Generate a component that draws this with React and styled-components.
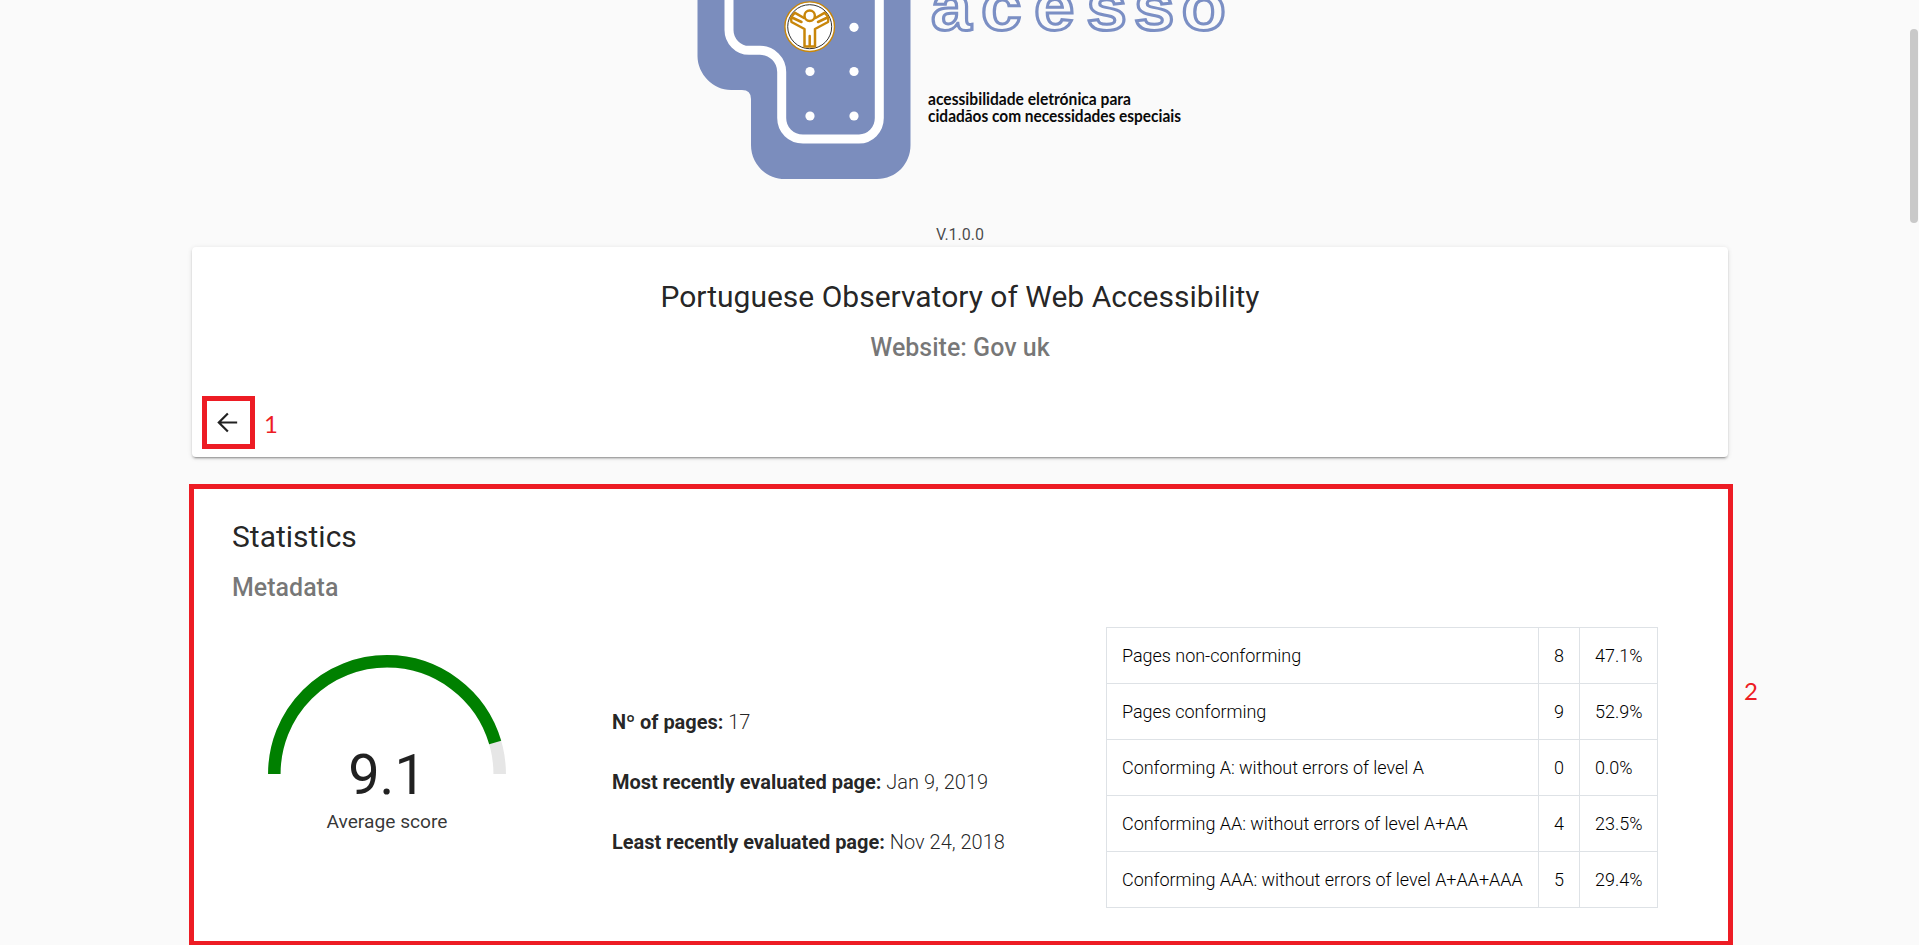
import React from "react";
import styled, { createGlobalStyle } from "styled-components";

const Global = createGlobalStyle`
  * { box-sizing: border-box; }
  html, body { margin: 0; background: #fafafa; }
  body { overflow: hidden; font-family: Roboto, "Liberation Sans", sans-serif; color: rgba(0, 0, 0, 0.87); }
`;

const Page = styled.div`
  position: relative;
  height: 945px;
  overflow: hidden;
  background: #fafafa;
`;

const Header = styled.header`
  height: 247px;
  display: flex;
  flex-direction: column;
  align-items: center;
`;

const LogoArt = styled.svg`
  display: block;
  flex: none;
  width: 560px;
  height: 190px;
`;

const Version = styled.span`
  margin-top: 35px;
  padding-left: 1px;
  font-size: 16px;
  line-height: 20px;
  color: rgba(0, 0, 0, 0.72);
`;

const HeaderCard = styled.section`
  width: 1536px;
  height: 210px;
  margin-left: 192px;
  padding: 34px 10px 0;
  display: flex;
  flex-direction: column;
  background: #fff;
  border-radius: 4px;
  box-shadow: 0 3px 1px -2px rgba(0, 0, 0, 0.2), 0 2px 2px 0 rgba(0, 0, 0, 0.14), 0 1px 5px 0 rgba(0, 0, 0, 0.12);
`;

const Title = styled.h1`
  margin: 0;
  font-size: 30px;
  line-height: 32px;
  font-weight: 400;
  text-align: ${(p) => (p.$center ? "center" : "left")};
`;

const Subtitle = styled.h2`
  margin: 19px 0 0;
  font-size: 25px;
  line-height: 32px;
  font-weight: 500;
  color: rgba(0, 0, 0, 0.54);
  text-align: ${(p) => (p.$center ? "center" : "left")};
`;

const BackRow = styled.div`
  margin-top: 32px;
  display: flex;
  align-items: center;
  gap: 9px;
`;

const BackButton = styled.button`
  width: 53px;
  height: 53px;
  padding: 0 3px 0 0;
  display: flex;
  align-items: center;
  justify-content: center;
  background: none;
  border: 5px solid #ed1c24;
  color: rgba(0, 0, 0, 0.87);
  svg { flex: none; width: 29px; height: 29px; }
`;

const Marker = styled.span`
  padding-top: 2px;
  font-family: Lato, sans-serif;
  font-size: 24px;
  line-height: 28px;
  color: #ed1c24;
`;

const StatsRow = styled.div`
  margin: 27px 0 0 189px;
  display: flex;
  align-items: flex-start;
  gap: 11px;
`;

const StatsMarker = styled(Marker)`
  margin-top: 191px;
`;

const StatsCard = styled.section`
  width: 1544px;
  height: 461px;
  padding: 32px 38px 0;
  background: #fff;
  border: 5px solid #ed1c24;
  border-bottom-width: 4px;
`;

const Columns = styled.div`
  margin-top: 9px;
  padding-left: 1px;
  display: flex;
  align-items: flex-start;
`;

const ScoreColumn = styled.div`
  width: 308px;
  margin-top: 41px;
  display: flex;
  flex-direction: column;
  align-items: center;
`;

const Gauge = styled.svg`
  display: block;
  width: 240px;
  height: 120px;
`;

const Score = styled.div`
  margin-top: -31px;
  font-size: 56px;
  line-height: 64px;
`;

const ScoreLabel = styled.div`
  margin-top: 3px;
  font-size: 19.2px;
  line-height: 24px;
  color: rgba(0, 0, 0, 0.8);
`;

const Facts = styled.dl`
  width: 494px;
  margin: 97px 0 0 71px;
  display: flex;
  flex-direction: column;
  gap: 36px;
`;

const Fact = styled.div`
  display: flex;
  gap: 5px;
  font-size: 20px;
  line-height: 24px;
  dt { font-weight: 700; letter-spacing: -0.04px; }
  dd { margin: 0; font-weight: 300; }
`;

const Table = styled.table`
  margin-top: 14px;
  width: 552px;
  border-collapse: collapse;
  table-layout: fixed;
  font-size: 18px;
  font-weight: 300;
  color: #000;
  td { height: 56px; padding: 0 0 0 15px; border: 1px solid #dee2e6; white-space: nowrap; line-height: 24px; letter-spacing: -0.03px; }
`;

const LabelCol = styled.col` width: 432px; `;
const CountCol = styled.col` width: 41px; `;

const ScrollThumb = styled.div`
  position: absolute;
  top: 29px;
  right: 1px;
  width: 8px;
  height: 194px;
  border-radius: 4px;
  background: #c9c9c9;
`;

const rows = [
  ["Pages non-conforming", "8", "47.1%"],
  ["Pages conforming", "9", "52.9%"],
  ["Conforming A: without errors of level A", "0", "0.0%"],
  ["Conforming AA: without errors of level A+AA", "4", "23.5%"],
  ["Conforming AAA: without errors of level A+AA+AAA", "5", "29.4%"],
];

const facts = [
  ["Nº of pages:", "17"],
  ["Most recently evaluated page:", "Jan 9, 2019"],
  ["Least recently evaluated page:", "Nov 24, 2018"],
];

function Logo() {
  return (
    <LogoArt viewBox="680 0 560 190">
      <path fill="#7b8dbd" d="M697.5-5V56C697.5 74 713 90 731 90H742Q751 90 751 99V145C751 164 766 179 785 179H877C896 179 910.5 164 910.5 145V-5Z" />
      <path fill="none" stroke="#fff" strokeWidth="9" d="M729-5V30C729 41 738 50.3 749 50.3H760C772 50.3 781.7 60 781.7 72V118C781.7 130 791 139 803 139H859C870 139 879.3 130 879.3 118V-5" />
      <g fill="#fff">
        <circle cx="854" cy="27.3" r="4.6" />
        <circle cx="810" cy="71.5" r="4.6" />
        <circle cx="854" cy="71.5" r="4.6" />
        <circle cx="810" cy="116" r="4.6" />
        <circle cx="854" cy="116" r="4.6" />
      </g>
      <circle cx="809.7" cy="26.7" r="24.8" fill="#fff" stroke="#c8860a" strokeWidth="1.4" />
      <circle cx="809.7" cy="26.7" r="22" fill="none" stroke="#333" strokeWidth="1" />
      <g fill="none" stroke="#c8860a" strokeWidth="2.5" strokeLinejoin="round" strokeLinecap="round">
        <circle cx="809.7" cy="15.8" r="5.2" />
        <path d="M795 12.8L804 18M792 17.5L801.5 22M824.500 12.800L815.500 18M827.500 17.500L818 22M795 12.800Q790 17 791.500 22L804.500 29V46.500H815V29L828 22Q829.500 17 824.500 12.800M809.700 36V46" />
      </g>
      <text transform="scale(1.07 1)" y="30" x="870.1 916.8 966.4 1015.4 1059.8 1104.2" fontFamily="Liberation Sans, sans-serif" fontWeight="700" fontSize="68" fill="none" stroke="#7b8fc4" strokeWidth="3">acesso</text>
      <g fontFamily="Lato, sans-serif" fontWeight="700" fontSize="16.4" fill="#0a0a0a">
        <text x="928" y="104.5" textLength="203" lengthAdjust="spacingAndGlyphs">acessibilidade eletrónica para</text>
        <text x="928" y="121.5" textLength="253" lengthAdjust="spacingAndGlyphs">cidadãos com necessidades especiais</text>
      </g>
    </LogoArt>
  );
}

export default function App() {
  return (
    <Page>
      <Global />
      <Header>
        <Logo />
        <Version>V.1.0.0</Version>
      </Header>
      <HeaderCard>
        <Title $center>Portuguese Observatory of Web Accessibility</Title>
        <Subtitle $center>Website: Gov uk</Subtitle>
        <BackRow>
          <BackButton aria-label="Back">
            <svg viewBox="0 0 24 24" fill="none" stroke="currentColor" strokeWidth="1.8">
              <path d="M20 12H5M12.300 4.500L4.800 12l7.500 7.500" />
            </svg>
          </BackButton>
          <Marker>1</Marker>
        </BackRow>
      </HeaderCard>
      <StatsRow>
        <StatsCard>
          <Title>Statistics</Title>
          <Subtitle>Metadata</Subtitle>
          <Columns>
            <ScoreColumn>
              <Gauge viewBox="-120 -120 240 120" fill="none" strokeWidth="12.5">
                <path stroke="#e6e6e6" d="M-112.7 0A112.7 112.7 0 0 1 112.7 0" />
                <path stroke="#008000" pathLength="100" strokeDasharray="91 100" d="M-112.7 0A112.7 112.7 0 0 1 112.7 0" />
              </Gauge>
              <Score>9.1</Score>
              <ScoreLabel>Average score</ScoreLabel>
            </ScoreColumn>
            <Facts>
              {facts.map(([name, value]) => (
                <Fact key={name}>
                  <dt>{name}</dt>
                  <dd>{value}</dd>
                </Fact>
              ))}
            </Facts>
            <Table>
              <colgroup>
                <LabelCol />
                <CountCol />
                <col />
              </colgroup>
              <tbody>
                {rows.map(([label, count, share]) => (
                  <tr key={label}>
                    <td>{label}</td>
                    <td>{count}</td>
                    <td>{share}</td>
                  </tr>
                ))}
              </tbody>
            </Table>
          </Columns>
        </StatsCard>
        <StatsMarker>2</StatsMarker>
      </StatsRow>
      <ScrollThumb />
    </Page>
  );
}
